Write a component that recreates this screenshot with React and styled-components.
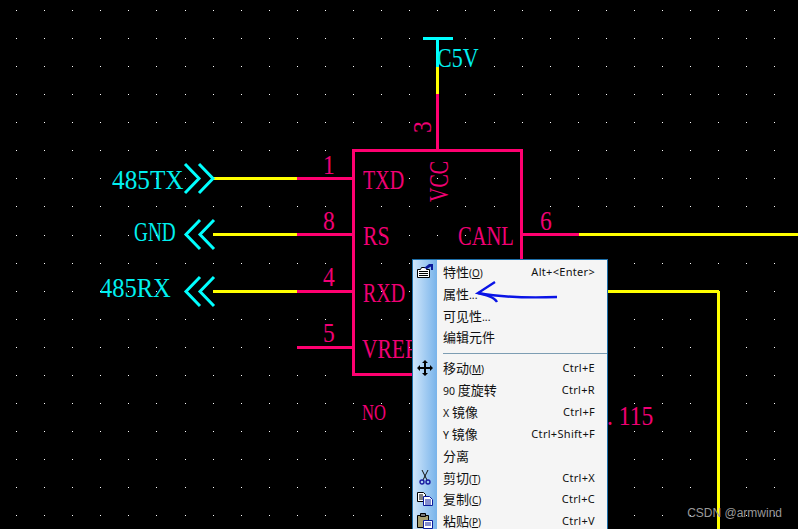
import React from 'react'
import styled, { createGlobalStyle } from 'styled-components'

const Global = createGlobalStyle`
  html, body { margin: 0; padding: 0; background: #000; }
`

const Page = styled.div`
  position: relative;
  width: 798px;
  height: 529px;
  overflow: hidden;
  background: #000;
`

const Board = styled.svg`
  position: absolute;
  left: 0;
  top: 0;
`

const Label = styled.span`
  position: absolute;
  left: ${p => p.$x}px;
  top: ${p => p.$y}px;
  font-family: "Liberation Serif", serif;
  font-size: 25px;
  line-height: 28px;
  white-space: nowrap;
  color: ${p => (p.$net ? '#00f0f0' : '#f00074')};
  transform-origin: 0 0;
  transform: ${p => (p.$up ? 'rotate(-90deg) ' : '')} scale(${p => p.$sx}, ${p => p.$sy});
`

const Watermark = styled.span`
  position: absolute;
  right: 16px;
  bottom: 8px;
  font-family: "Liberation Sans", sans-serif;
  font-size: 12px;
  line-height: 16px;
  color: #9a9a9a;
`

const Menu = styled.div`
  position: absolute;
  left: 412px;
  top: 259px;
  width: 196px;
  height: 272px;
  padding-top: 0.5px;
  box-sizing: border-box;
  border: 1px solid #1d6ea8;
  background: linear-gradient(90deg, #cfe6fb 0, #78b3ea 24px, #f5f5f5 24px);
  font-family: "Noto Sans", "Noto Sans CJK SC", sans-serif;
  font-size: 11px;
  color: #111;
`

const Row = styled.div`
  display: flex;
  align-items: center;
  height: 21.85px;
  padding-right: 12px;
`

const IconSlot = styled.div`
  flex: 0 0 24px;
  height: 100%;
  display: flex;
  align-items: center;
  justify-content: center;
`

const Name = styled.span`
  flex: 1;
  margin-left: 6px;
  font-family: "Noto Sans", "Noto Sans CJK SC", sans-serif;
  font-size: 13px;
  white-space: nowrap;
`

const Small = styled.span`
  font-size: 10.5px;
`

const Mnemonic = styled.span`
  font-size: 10px;
  u { text-decoration: underline; }
`

const Shortcut = styled.span`
  font-size: 11px;
  letter-spacing: 0.3px;
  white-space: nowrap;
`

const Separator = styled.div`
  height: 1px;
  margin: 5px 0 3px 30px;
  background: #7d9db3;
`

const Arrow = styled.svg`
  position: absolute;
  left: 470px;
  top: 275px;
`

const pink = '#ff0070'
const yellow = '#ffff00'
const cyan = '#00ffff'

const wires = [
  [423, 38.5, 453, 38.5, cyan],
  [437.5, 38, 437.5, 67, cyan],
  [437.5, 67, 437.5, 94, yellow],
  [437.5, 94, 437.5, 150, pink],
  [213, 178.5, 297, 178.5, yellow],
  [297, 178.5, 353, 178.5, pink],
  [213, 234.5, 297, 234.5, yellow],
  [297, 234.5, 353, 234.5, pink],
  [213, 291.5, 297, 291.5, yellow],
  [297, 291.5, 353, 291.5, pink],
  [297, 347.5, 353, 347.5, pink],
  [522, 234.5, 579, 234.5, pink],
  [579, 234.5, 798, 234.5, yellow],
  [600, 291.5, 719, 291.5, yellow],
  [718.5, 291, 718.5, 529, yellow],
]

const chevrons = [
  'M185 164 L199 178.5 L185 193',
  'M199 164 L213 178.5 L199 193',
  'M200 220 L186 234.5 L200 249',
  'M214 220 L200 234.5 L214 249',
  'M200 277 L186 291.5 L200 306',
  'M214 277 L200 291.5 L214 306',
]

const dots = []
for (let i = 0; i < 29; i++) {
  for (let j = 0; j < 19; j++) {
    dots.push([Math.round(16 + 28.09 * i), Math.round(10 + 28.07 * j)])
  }
}

const labels = [
  { text: '485TX', x: 112, y: 165, net: true, sx: 1.01, sy: 1.08 },
  { text: 'GND', x: 134, y: 217, net: true, sx: 0.77, sy: 1.08 },
  { text: '485RX', x: 100, y: 273, net: true, sx: 0.98, sy: 1.08 },
  { text: 'C5V', x: 437, y: 43, net: true, sx: 0.88, sy: 1.08 },
  { text: '1', x: 323, y: 150, sx: 0.94, sy: 1.08 },
  { text: '8', x: 323, y: 206, sx: 0.94, sy: 1.08 },
  { text: '4', x: 323, y: 262, sx: 0.94, sy: 1.08 },
  { text: '5', x: 323, y: 318, sx: 0.94, sy: 1.08 },
  { text: '6', x: 540, y: 206, sx: 0.94, sy: 1.08 },
  { text: 'TXD', x: 363, y: 165, sx: 0.8, sy: 1.08 },
  { text: 'RS', x: 363, y: 221, sx: 0.87, sy: 1.08 },
  { text: 'RXD', x: 363, y: 278, sx: 0.8, sy: 1.08 },
  { text: 'VREF', x: 362, y: 334, sx: 0.86, sy: 1.08 },
  { text: 'CANL', x: 458, y: 221, sx: 0.82, sy: 1.08 },
  { text: 'NO', x: 362, y: 399, sx: 0.66, sy: 0.95 },
  { text: '. 115', x: 607, y: 401, sx: 0.94, sy: 1.08 },
  { text: '3', x: 409, y: 133, up: true, sx: 0.94, sy: 1 },
  { text: 'VCC', x: 424, y: 202, up: true, sx: 0.8, sy: 1.1 },
]

function PropsIcon() {
  return (
    <svg width="18" height="16" viewBox="0 0 18 16">
      <path d="M1.500 6.500h3l1-2h5v2h3v8h-12z" fill="#fff" stroke="#000" />
      <path d="M3 8.500h9M3 10.500h9M3 12.500h9" stroke="#000" />
      <path d="M8 5l5-4h4v6h-2V3.500l-4 2.500z" fill="#0a1a9c" />
    </svg>
  )
}

function MoveIcon() {
  return (
    <svg width="16" height="16" viewBox="0 0 16 16" fill="#000">
      <path d="M7 3h2v4h4v2H9v4H7V9H3V7h4z" />
      <path d="M8 0l3 3H5zM8 16l-3-3h6zM0 8l3-3v6zM16 8l-3 3V5z" />
    </svg>
  )
}

function CutIcon() {
  return (
    <svg width="12" height="16" viewBox="0 0 12 16" fill="none">
      <path d="M3 1l5 10M9 1L4 11" stroke="#111" />
      <circle cx="3" cy="13" r="2" stroke="#1a1aa0" strokeWidth="1.400" />
      <circle cx="9" cy="13" r="2" stroke="#1a1aa0" strokeWidth="1.400" />
    </svg>
  )
}

function CopyIcon() {
  return (
    <svg width="16" height="14" viewBox="0 0 16 14">
      <path d="M.5.500h6l2 2v7h-8z" fill="#fff" stroke="#000" />
      <path d="M2 3h4M2 5h4M2 7h4" stroke="#000" />
      <path d="M6.500 4.500h6l3 3v6h-9z" fill="#fff" stroke="#0a1a9c" />
      <path d="M8 8h6M8 10h6M8 12h6" stroke="#0a1a9c" />
    </svg>
  )
}

function PasteIcon() {
  return (
    <svg width="16" height="16" viewBox="0 0 16 16">
      <path d="M.5 2.500h11v12H.5z" fill="#a8a070" stroke="#000" />
      <path d="M3.500.500h5v3h-5z" fill="#777" stroke="#000" />
      <path d="M6.500 7.500h9v8h-9z" fill="#fff" stroke="#0a1a9c" />
      <path d="M8 10h6M8 12h6" stroke="#0a1a9c" />
    </svg>
  )
}

const items = [
  { name: '特性', key: 'O', shortcut: 'Alt+<Enter>', icon: <PropsIcon /> },
  { name: '属性', tail: '...' },
  { name: '可见性', tail: '...' },
  { name: '编辑元件', line: true },
  { name: '移动', key: 'M', shortcut: 'Ctrl+E', icon: <MoveIcon /> },
  { lead: '90 ', name: '度旋转', shortcut: 'Ctrl+R' },
  { lead: 'X ', name: '镜像', shortcut: 'Ctrl+F' },
  { lead: 'Y ', name: '镜像', shortcut: 'Ctrl+Shift+F' },
  { name: '分离' },
  { name: '剪切', key: 'T', shortcut: 'Ctrl+X', icon: <CutIcon /> },
  { name: '复制', key: 'C', shortcut: 'Ctrl+C', icon: <CopyIcon /> },
  { name: '粘贴', key: 'P', shortcut: 'Ctrl+V', icon: <PasteIcon /> },
]

function App() {
  return (
    <Page>
      <Global />
      <Board width="798" height="529">
        {dots.map(([x, y]) => (
          <rect key={x + '-' + y} x={x} y={y} width="1" height="1" fill="#fff" />
        ))}
        <g shapeRendering="crispEdges" strokeWidth="3">
          {wires.map(([x1, y1, x2, y2, color], i) => (
            <line key={i} x1={x1} y1={y1} x2={x2} y2={y2} stroke={color} />
          ))}
          <rect x="353.500" y="150.500" width="168" height="224" fill="none" stroke={pink} />
        </g>
        <g fill="none" stroke={cyan} strokeWidth="3">
          {chevrons.map(d => (
            <path key={d} d={d} />
          ))}
        </g>
      </Board>

      {labels.map(l => (
        <Label key={l.text} $x={l.x} $y={l.y} $net={l.net} $up={l.up} $sx={l.sx} $sy={l.sy}>
          {l.text}
        </Label>
      ))}

      <Menu>
        {items.map((item, i) => (
          <React.Fragment key={i}>
            <Row>
              <IconSlot>{item.icon}</IconSlot>
              <Name>
                {item.lead && <Small>{item.lead}</Small>}
                {item.name}
                {item.tail && <Small>{item.tail}</Small>}
                {item.key && (
                  <Mnemonic>
                    (<u>{item.key}</u>)
                  </Mnemonic>
                )}
              </Name>
              {item.shortcut && <Shortcut>{item.shortcut}</Shortcut>}
            </Row>
            {item.line && <Separator />}
          </React.Fragment>
        ))}
      </Menu>

      <Arrow width="92" height="32" viewBox="0 0 92 32" fill="none" stroke="#0a14e6" strokeWidth="2.400">
        <path d="M25 7 L8 18 C30 22 60 23 87 22" />
        <path d="M8 18 C16 20 24 22 27 27" />
      </Arrow>

      <Watermark>CSDN @armwind</Watermark>
    </Page>
  )
}

export default App
